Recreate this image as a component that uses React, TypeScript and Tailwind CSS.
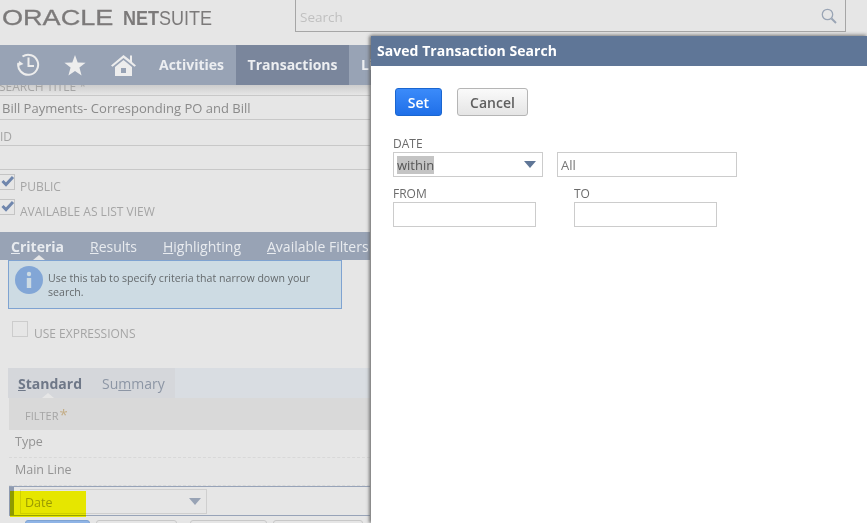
const SANS = "font-['Open_Sans',sans-serif]";

function HistoryIcon() {
  return (
    <svg width="24" height="24" viewBox="0 0 24 24" fill="none" stroke="#ededed" strokeWidth="2" className="block">
      <path d="M6.5 3.5 A10 10 0 1 1 2.3 10" />
      <path d="M1.5 13.5 L3.2 8 L7.5 11 Z" fill="#ededed" stroke="none" />
      <path d="M12.5 4.5 V13 H18" />
    </svg>
  );
}

function StarIcon() {
  return (
    <svg width="22" height="21" viewBox="0 0 22 21" className="block">
      <path d="M11 0 L13.7 7.4 L21.6 7.7 L15.4 12.6 L17.6 20.4 L11 16 L4.4 20.4 L6.6 12.6 L0.4 7.7 L8.3 7.4 Z" fill="#ededed" />
    </svg>
  );
}

function HomeIcon() {
  return (
    <svg width="25" height="22" viewBox="0 0 25 22" className="block">
      <path d="M12.5 1 L19 6 V1.5 H21 V8 L25 11.5 L23.5 12.8 L12.5 4 L1.5 12.8 L0 11.5 Z" fill="#ededed" />
      <path d="M4 13 L12.5 6 L21 13 V22 H4 Z M10 14 V19 H15 V14 Z" fill="#ededed" fillRule="evenodd" />
    </svg>
  );
}

function Caret({ color }: { color: string }) {
  return (
    <svg width="12" height="7" viewBox="0 0 12 7" className="block">
      <path d="M0 0 H12 L6 7 Z" fill={color} />
    </svg>
  );
}

function CheckRow({ label, className }: { label: string; className: string }) {
  return (
    <div className={`flex items-center ${className}`}>
      <div className="relative -ml-[1px] h-[16px] w-[16px] shrink-0 border border-[#c4c4c4]">
        <svg width="14" height="12" viewBox="0 0 14 12" className="absolute left-[1px] top-[0px]">
          <path d="M1.5 6 L5 9.5 L12 2" fill="none" stroke="#6f86ad" strokeWidth="3" />
        </svg>
      </div>
      <span className="ml-[5px] mt-[10px] text-[12px] leading-[16px] text-[#a5a5a5]">{label}</span>
    </div>
  );
}

function TabLabel({ first, rest, active }: { first: string; rest: string; active?: boolean }) {
  return (
    <span className={`pt-[2px] text-[14px] leading-[20px] text-[#e8ebef] ${active ? "font-bold" : ""}`}>
      <span className="underline">{first}</span>
      {rest}
    </span>
  );
}

function GridRow({ label }: { label: string }) {
  return (
    <div className="flex h-[28px] items-center border-b border-dashed border-[#d8d8d8] pb-[3px] pl-[6px] text-[12.5px] text-[#949494]">
      {label}
    </div>
  );
}

function Dialog() {
  return (
    <div className={`absolute bottom-0 left-[371px] right-0 top-[36px] z-20 bg-white shadow-[-2px_0_3px_rgba(90,90,90,0.7),0_-2px_3px_rgba(150,150,150,0.6)] ${SANS}`}>
      <div className="flex h-[30px] items-center bg-[#5f7697] pb-[2px] pl-[6px] text-[14px] font-bold tracking-[0.05px] text-white">
        Saved Transaction Search
      </div>
      <div className="flex gap-[15px] pl-[24px] pt-[22px]">
        <button className="h-[28px] w-[47px] rounded-[3px] border border-[#1a66d0] bg-gradient-to-b from-[#3b8bfa] to-[#1f6fe8] text-[14px] font-semibold text-white">
          Set
        </button>
        <button className="h-[28px] w-[71px] rounded-[3px] border border-[#b5b5b5] bg-gradient-to-b from-[#fafafa] to-[#e5e5e5] text-[14px] font-semibold text-[#5f5f5f]">
          Cancel
        </button>
      </div>
      <div className="pl-[22px] pt-[20px] text-[12px] text-[#6b6b6b]">
        <div className="h-[16px] leading-[16px]">DATE</div>
        <div className="flex gap-[14px]">
          <div className="flex h-[25px] w-[150px] items-center justify-between border border-[#cccccc] pl-[3px] pr-[6px]">
            <span className="bg-[#c4c4c4] text-[13px] leading-[18px] text-[#555555]">within</span>
            <Caret color="#5f7697" />
          </div>
          <div className="flex h-[25px] w-[180px] items-center border border-[#cccccc] pl-[3px] pt-[2px] text-[13px] text-[#777777]">All</div>
        </div>
        <div className="mt-[8px] flex gap-[38px]">
          <div>
            <div className="h-[17px] leading-[17px]">FROM</div>
            <div className="h-[25px] w-[143px] border border-[#cccccc]" />
          </div>
          <div>
            <div className="h-[17px] leading-[17px]">TO</div>
            <div className="h-[25px] w-[143px] border border-[#cccccc]" />
          </div>
        </div>
      </div>
    </div>
  );
}

export default function App() {
  return (
    <div className={`relative h-[523px] w-[867px] overflow-hidden bg-[#e6e6e6] ${SANS}`}>
      <header className="flex h-[45px] items-start">
        <div className="flex h-[35px] w-[295px] items-center pl-[2px] font-['Liberation_Sans',sans-serif] text-[#7c7a7a]">
          <span className="inline-block w-[112px] origin-left scale-x-[1.23] whitespace-nowrap text-[22px] leading-none [-webkit-text-stroke:0.3px_#7c7a7a]">ORACLE</span>
          <span className="ml-[9px] inline-block origin-left scale-x-[0.9] whitespace-nowrap text-[20px] leading-none">
            <span className="font-bold">NET</span>SUITE
          </span>
        </div>
        <div className="flex h-[32px] w-[551px] items-center justify-between border border-t-0 border-[#a6a6a6] pl-[4px] pr-[8px]">
          <span className="pt-[4px] text-[13.5px] text-[#c0c0c0]">Search</span>
          <svg width="16" height="16" viewBox="0 0 16 16" fill="none" stroke="#9aa5b5" className="block">
            <circle cx="6.5" cy="6.5" r="5.2" strokeWidth="1.3" />
            <path d="M10.5 10.5 L15 15" strokeWidth="2" />
          </svg>
        </div>
      </header>

      <nav className="relative z-10 flex h-[40px] items-center bg-[#98a3b5]">
        <div className="ml-[16px]"><HistoryIcon /></div>
        <div className="ml-[24px]"><StarIcon /></div>
        <div className="ml-[25px]"><HomeIcon /></div>
        <span className="ml-[23px] pb-[2px] text-[14px] font-bold text-[#eceef1]">Activities</span>
        <div className="ml-[12px] flex h-full w-[113px] items-center justify-center bg-[#7a869c] pb-[2px] text-[14px] font-bold text-[#eceef1]">
          Transactions
        </div>
        <span className="ml-[12px] pb-[2px] text-[14px] font-bold text-[#eceef1]">Lists</span>
      </nav>

      <main className="w-[370px]">
        <div className="flex h-[11px] items-end overflow-visible border-b border-[#c8c8c8] bg-gradient-to-b from-[#cdcdcd] to-[#e6e6e6]">
          <span className="-ml-[1px] whitespace-nowrap text-[12px] leading-[16px] text-[#a5a5a5]">SEARCH TITLE *</span>
        </div>
        <div className="flex h-[24px] items-center border-b border-[#c8c8c8] pl-[2px] pt-[2px] text-[13px] text-[#8a8a8a]">
          Bill Payments- Corresponding PO and Bill
        </div>
        <div className="flex h-[26px] items-end border-b border-[#c8c8c8] text-[12px] text-[#a5a5a5]">
          <span className="-mb-[1px]">ID</span>
        </div>
        <div className="h-[24px] border-b border-[#c8c8c8]" />
        <CheckRow label="PUBLIC" className="mt-[4px] h-[16px]" />
        <CheckRow label="AVAILABLE AS LIST VIEW" className="mt-[9px] h-[16px]" />

        <div className="relative mt-[17px] flex h-[28px] items-center gap-[26px] whitespace-nowrap bg-[#98a3b5] pl-[11px]">
          <TabLabel first="C" rest="riteria" active />
          <TabLabel first="R" rest="esults" />
          <TabLabel first="H" rest="ighlighting" />
          <TabLabel first="A" rest="vailable Filters" />
          <div className="absolute bottom-0 left-[33px] h-0 w-0 border-x-[6px] border-b-[5px] border-x-transparent border-b-[#e6e6e6]" />
        </div>

        <div className="ml-[8px] flex h-[49px] w-[334px] border border-[#7fa3d1] bg-[#cddbe3] pl-[6px] pt-[5px]">
          <svg width="28" height="28" viewBox="0 0 28 28" className="shrink-0">
            <circle cx="14" cy="14" r="14" fill="#82a6d6" />
            <circle cx="14" cy="8" r="2.2" fill="#cddbe3" />
            <rect x="11.8" y="12" width="4.4" height="10" fill="#cddbe3" />
          </svg>
          <p className="ml-[5px] mt-[5px] w-[280px] text-[10.6px] leading-[14px] text-[#656a6d]">
            Use this tab to specify criteria that narrow down your search.
          </p>
        </div>

        <div className="ml-[12px] mt-[12px] flex h-[16px] items-center">
          <div className="h-[16px] w-[16px] border border-[#cccccc]" />
          <span className="ml-[6px] mt-[10px] text-[12px] text-[#a5a5a5]">USE EXPRESSIONS</span>
        </div>

        <div className="relative ml-[8px] mt-[31px] flex h-[30px] bg-[#d9dde2]">
          <div className="flex w-[167px] items-center gap-[20px] bg-[#d5d7db] pl-[10px] text-[14px] text-[#8d96a5]">
            <span className="font-bold text-[#6f7888]"><span className="underline">S</span>tandard</span>
            <span>Su<span className="underline">m</span>mary</span>
          </div>
          <div className="absolute bottom-0 left-[34px] h-0 w-0 border-x-[6px] border-b-[5px] border-x-transparent border-b-[#e6e6e6]" />
        </div>

        <div className="ml-[9px]">
          <div className="flex h-[32px] items-center bg-[#d9d9d9] pl-[16px] pt-[5px] text-[11px] text-[#a5a5a5]">
            FILTER<span className="mb-[5px] ml-[1px] text-[15px] leading-none text-[#c4ae88]">*</span>
          </div>
          <GridRow label="Type" />
          <GridRow label="Main Line" />
          <div className="relative h-[30px] border-y border-[#97a3b8]">
            <div className="absolute left-0 top-0 h-full w-[5px] bg-[#8e9ab0]" />
            <div className="absolute left-[11px] top-[2px] flex h-[25px] w-[187px] items-center justify-between border border-[#cfcfcf] pl-[4px] pr-[5px] text-[12.5px] text-[#9a9a9a]">
              <span className="pt-[3px]">Date</span>
              <Caret color="#98a3b5" />
            </div>
            <div className="absolute left-[1px] top-[4px] h-[26px] w-[76px] bg-[#ffff00] mix-blend-multiply" />
          </div>
          <div className="flex gap-[6px] pl-[16px] pt-[4px]">
            <div className="h-[8px] w-[65px] rounded-t-[3px] border border-[#7fa3d1] bg-[#8fb4e6]" />
            <div className="h-[8px] w-[81px] rounded-t-[3px] border border-[#c8c8c8]" />
            <div className="ml-[7px] h-[8px] w-[77px] rounded-t-[3px] border border-[#c8c8c8]" />
            <div className="h-[8px] w-[90px] rounded-t-[3px] border border-[#c8c8c8]" />
          </div>
        </div>
      </main>

      <Dialog />
    </div>
  );
}
